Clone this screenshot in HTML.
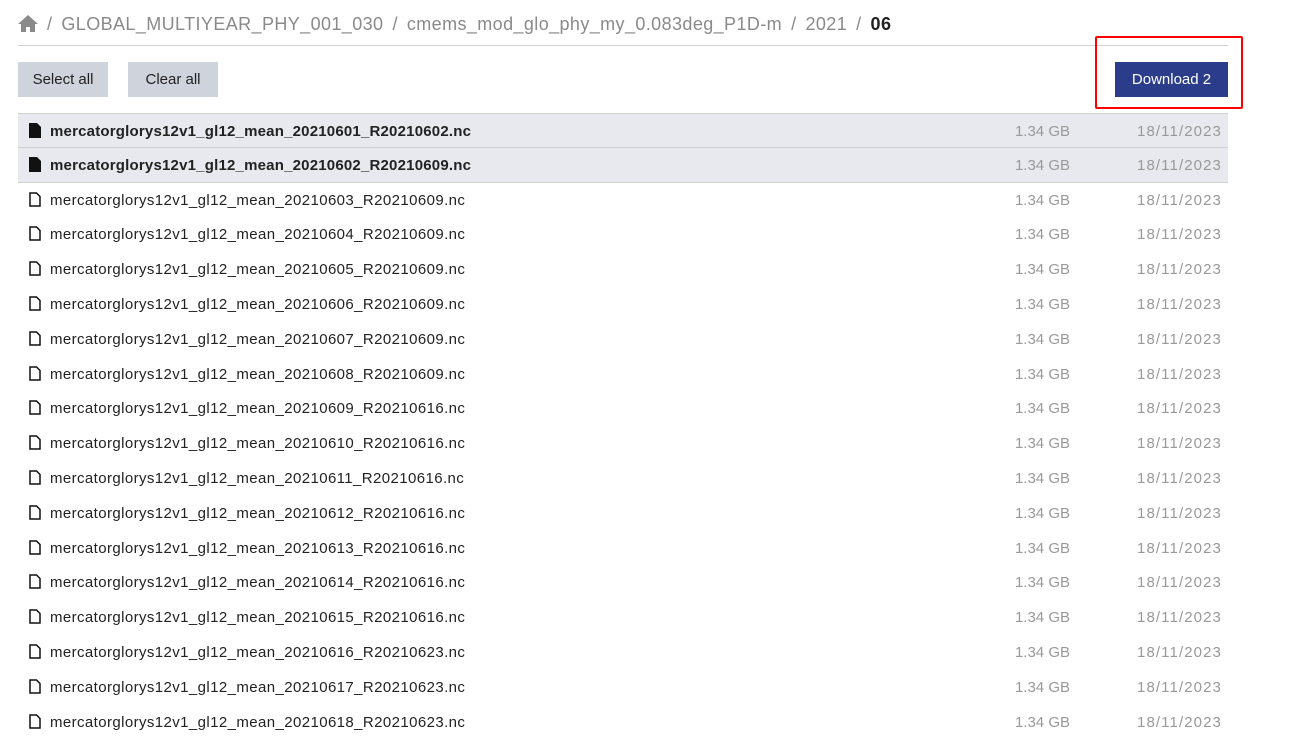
<!DOCTYPE html>
<html><head><style>
body{margin:0;background:#fff;font-family:"Liberation Sans",sans-serif;width:1302px;height:743px;overflow:hidden;position:relative}
.bc{position:absolute;left:18px;top:14px;font-size:18px;color:#8a8a8a;white-space:nowrap;letter-spacing:0.4px}
.bc span{margin:0 9px}
.bc b{color:#222;font-weight:bold}
.hr{position:absolute;left:18px;width:1210px;top:45px;height:1px;background:#d0d0d0}
.btn{position:absolute;top:62px;height:35px;line-height:36px;text-align:center;font-size:15px;background:#ced3dc;color:#222}
.dl{background:#2b3d8a;color:#fff}
.red{position:absolute;left:1095px;top:36px;width:144px;height:69px;border:2px solid #f00;border-radius:2px}
.rows{position:absolute;left:18px;top:113px;width:1210px}
.r{height:34.8px;position:relative;font-size:15px;color:#222;box-sizing:border-box}
.r.s{background:#e8e9ee;border-top:1px solid #d0d0d0;border-bottom:1px solid #d0d0d0;font-weight:bold}
.r.s+.r.s{border-top:none}
.r svg{position:absolute;left:11px;top:9px}
.n{position:absolute;left:32px;top:9px;letter-spacing:0.4px}
.r.s .n{letter-spacing:0.2px}
.z{position:absolute;right:158px;top:9px;color:#999;font-weight:normal}
.d{position:absolute;right:7px;top:9px;color:#999;font-weight:normal;letter-spacing:1.1px;margin-right:-1px}
</style></head><body>
<div class="bc"><svg width="20" height="17" viewBox="0 0 20 17" style="vertical-align:-2px"><path d="M10 0L0 9h3v8h5v-5h4v5h5V9h3z" fill="#8a8a8a"/></svg><span>/</span>GLOBAL_MULTIYEAR_PHY_001_030<span>/</span>cmems_mod_glo_phy_my_0.083deg_P1D-m<span>/</span>2021<span>/</span><b>06</b></div>
<div class="hr"></div>
<div class="btn" style="left:18px;width:90px">Select all</div>
<div class="btn" style="left:128px;width:90px">Clear all</div>
<div class="btn dl" style="left:1115px;width:113px">Download 2</div>
<div class="red"></div>
<div class="rows" id="rows"></div>
<script>
var h='';var days=['01','02','03','04','05','06','07','08','09','10','11','12','13','14','15','16','17','18'];
var rr=['20210602','20210609','20210609','20210609','20210609','20210609','20210609','20210609','20210616','20210616','20210616','20210616','20210616','20210616','20210616','20210623','20210623','20210623'];
for(var i=0;i<18;i++){var s=i<2;
h+='<div class="r'+(s?' s':'')+'">'+(s?'<svg width="12" height="15" viewBox="0 0 12 15"><path d="M0 0h8l4 4v11H0z" fill="#111"/></svg>':'<svg width="12" height="15" viewBox="0 0 12 15"><path d="M1 1h6.5l3.5 3.5V14H1z" fill="none" stroke="#111" stroke-width="1.5"/></svg>')+'<span class="n">mercatorglorys12v1_gl12_mean_202106'+days[i]+'_R'+rr[i]+'.nc</span><span class="z">1.34 GB</span><span class="d">18/11/2023</span></div>';}
document.getElementById('rows').innerHTML=h;
</script>
</body></html>
